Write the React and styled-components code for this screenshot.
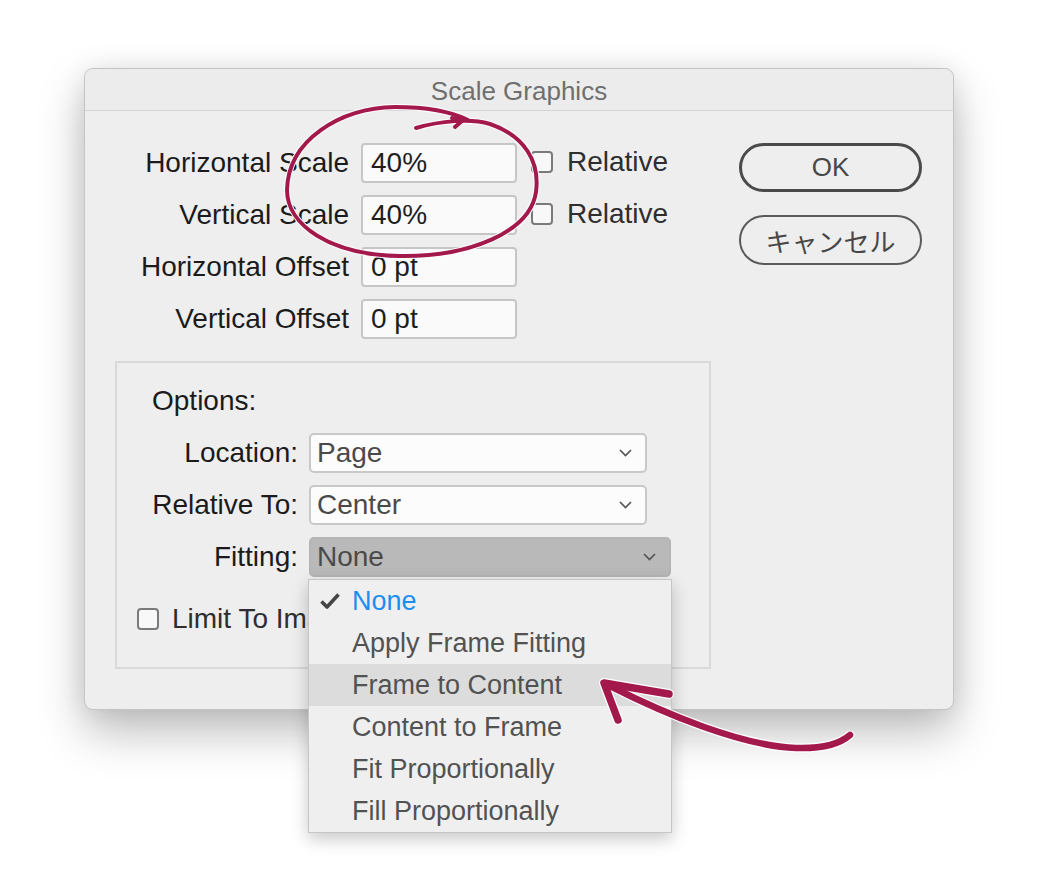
import React from "react";
import styled, { createGlobalStyle } from "styled-components";

const GlobalStyle = createGlobalStyle`
  html, body {
    margin: 0;
    background: #ffffff;
  }
  body {
    font-family: "Liberation Sans", Arial, sans-serif;
  }
`;

const menuItems = [
  "None",
  "Apply Frame Fitting",
  "Frame to Content",
  "Content to Frame",
  "Fit Proportionally",
  "Fill Proportionally",
];

function Chevron() {
  return (
    <svg width="13" height="8" viewBox="0 0 13 8">
      <path d="M1 1 L6.5 6.5 L12 1" fill="none" stroke="#555" strokeWidth="1.7" />
    </svg>
  );
}

function Check() {
  return (
    <svg width="22" height="18" viewBox="0 0 22 18">
      <path
        d="M2.5 9.5 L8 15 L19.5 2.5"
        fill="none"
        stroke="#454545"
        strokeWidth="3.6"
        strokeLinejoin="round"
      />
    </svg>
  );
}

function Select({ value, open, wide }) {
  return (
    <SelectBox $open={open} $wide={wide}>
      <span>{value}</span>
      <Chevron />
    </SelectBox>
  );
}

function Annotations() {
  const circle =
    "M416 128 C440 121, 470 118, 490 124 C525 136, 540 162, 536 192 C530 232, 470 257, 400 256 C330 255, 287 225, 287 190 C288 140, 340 108, 395 107 C425 107, 452 112, 468 120";
  const tick = "M452 118 L463 120 L455 127";
  const shaft = "M610 686 C665 714, 742 746, 796 748 C826 749, 842 742, 850 735";
  const head = "M618 720 L604 683 L669 694";
  return (
    <Overlay width="1038" height="872" viewBox="0 0 1038 872">
      <g fill="none" strokeLinecap="round" strokeLinejoin="round">
        <path d={circle} stroke="#fff" strokeWidth="6" />
        <path d={shaft} stroke="#fff" strokeWidth="9" />
        <path d={head} stroke="#fff" strokeWidth="10" />
        <path d={circle} stroke="#a3194c" strokeWidth="4" />
        <path d={tick} stroke="#a3194c" strokeWidth="4" />
        <path d={shaft} stroke="#a3194c" strokeWidth="6.5" />
        <path d={head} stroke="#a3194c" strokeWidth="7.5" />
      </g>
    </Overlay>
  );
}

export default function App() {
  return (
    <Page>
      <GlobalStyle />
      <Dialog>
        <TitleBar>Scale Graphics</TitleBar>
        <Body>
          <LeftCol>
            <Fields>
              <Label>Horizontal Scale</Label>
              <Input>40%</Input>
              <CheckRow>
                <Box />
                <span>Relative</span>
              </CheckRow>
              <Label>Vertical Scale</Label>
              <Input>40%</Input>
              <CheckRow>
                <Box />
                <span>Relative</span>
              </CheckRow>
              <Label>Horizontal Offset</Label>
              <Input>0 pt</Input>
              <span />
              <Label>Vertical Offset</Label>
              <Input>0 pt</Input>
              <span />
            </Fields>

            <OptionsBox>
              <OptionsTitle>Options:</OptionsTitle>
              <OptGrid>
                <Label>Location:</Label>
                <Select value="Page" />
                <Label>Relative To:</Label>
                <Select value="Center" />
                <Label>Fitting:</Label>
                <FittingWrap>
                  <Select value="None" open wide />
                  <Menu>
                    {menuItems.map((item, i) => (
                      <MenuItem key={item} $hover={i === 2} $selected={i === 0}>
                        {i === 0 && (
                          <CheckMark>
                            <Check />
                          </CheckMark>
                        )}
                        {item}
                      </MenuItem>
                    ))}
                  </Menu>
                </FittingWrap>
              </OptGrid>
              <LimitRow>
                <Box />
                <span>Limit To Image</span>
              </LimitRow>
            </OptionsBox>
          </LeftCol>

          <Buttons>
            <Button $primary>OK</Button>
            <Button>キャンセル</Button>
          </Buttons>
        </Body>
      </Dialog>
      <Annotations />
    </Page>
  );
}

const Page = styled.div`
  position: relative;
  width: 1038px;
  height: 872px;
  padding: 68px 0 0 84px;
  box-sizing: border-box;
  overflow: hidden;
`;

const Dialog = styled.div`
  width: 870px;
  height: 642px;
  box-sizing: border-box;
  border: 1px solid #c4c4c4;
  border-radius: 9px;
  background: #eeeeee;
  box-shadow: 0 22px 46px rgba(0, 0, 0, 0.26), 0 0 26px rgba(0, 0, 0, 0.08);
  display: flex;
  flex-direction: column;
`;

const TitleBar = styled.div`
  height: 42px;
  box-sizing: border-box;
  padding-top: 3px;
  border-bottom: 1px solid #d4d4d4;
  border-radius: 9px 9px 0 0;
  background: #ececec;
  display: flex;
  align-items: center;
  justify-content: center;
  font-size: 26px;
  color: #6f6f6f;
`;

const Body = styled.div`
  flex: 1;
  display: flex;
  padding: 32px 31px 0 30px;
`;

const LeftCol = styled.div`
  display: flex;
  flex-direction: column;
`;

const Fields = styled.div`
  display: grid;
  grid-template-columns: 234px 156px auto;
  grid-auto-rows: 40px;
  column-gap: 12px;
  row-gap: 12px;
`;

const Label = styled.div`
  display: flex;
  align-items: center;
  justify-content: flex-end;
  font-size: 28px;
  color: #1b1b1b;
  white-space: nowrap;
`;

const Input = styled.div`
  box-sizing: border-box;
  display: flex;
  align-items: center;
  padding-left: 8px;
  background: #fafafa;
  border: 2px solid #c6c6c6;
  border-radius: 4px;
  font-size: 28px;
  color: #1e1e1e;
`;

const CheckRow = styled.div`
  display: flex;
  align-items: center;
  gap: 14px;
  margin-left: 2px;
  font-size: 28px;
  color: #2e2e2e;
  margin-top: -2px;
`;

const Box = styled.div`
  width: 22px;
  height: 22px;
  box-sizing: border-box;
  border: 2px solid #7a7a7a;
  border-radius: 4px;
  background: #f8f8f8;
  flex-shrink: 0;
`;

const OptionsBox = styled.div`
  margin-top: 22px;
  width: 596px;
  height: 308px;
  box-sizing: border-box;
  border: 2px solid #d9d9d9;
  padding: 22px 0 0 35px;
`;

const OptionsTitle = styled.div`
  font-size: 28px;
  line-height: 32px;
  color: #1b1b1b;
`;

const OptGrid = styled.div`
  margin-top: 16px;
  display: grid;
  grid-template-columns: 146px auto;
  grid-auto-rows: 40px;
  column-gap: 11px;
  row-gap: 12px;
  align-items: stretch;
`;

const SelectBox = styled.div`
  box-sizing: border-box;
  width: ${(p) => (p.$wide ? "362px" : "338px")};
  height: 40px;
  display: flex;
  align-items: center;
  justify-content: space-between;
  padding: 0 13px 0 6px;
  background: ${(p) => (p.$open ? "#b9b9b9" : "#fcfcfc")};
  border: 2px solid ${(p) => (p.$open ? "#b4b4b4" : "#c8c8c8")};
  border-radius: 5px;
  font-size: 28px;
  color: #4a4a4a;
`;

const FittingWrap = styled.div`
  position: relative;
`;

const Menu = styled.div`
  position: absolute;
  top: 42px;
  left: -1px;
  width: 364px;
  box-sizing: border-box;
  border: 1px solid #c6c6c6;
  background: #efefef;
  box-shadow: 0 6px 16px rgba(0, 0, 0, 0.22);
  z-index: 2;
`;

const MenuItem = styled.div`
  position: relative;
  height: 42px;
  display: flex;
  align-items: center;
  padding-left: 43px;
  font-size: 27px;
  color: ${(p) => (p.$selected ? "#1c8ef0" : "#525252")};
  background: ${(p) => (p.$hover ? "#dcdcdc" : "transparent")};
`;

const CheckMark = styled.span`
  position: absolute;
  left: 10px;
  top: 12px;
  display: flex;
`;

const LimitRow = styled.div`
  margin: 22px 0 0 -15px;
  height: 40px;
  display: flex;
  align-items: center;
  gap: 13px;
  font-size: 28px;
  color: #2e2e2e;
`;

const Buttons = styled.div`
  margin-left: auto;
  width: 183px;
  display: flex;
  flex-direction: column;
  gap: 23px;
`;

const Button = styled.div`
  box-sizing: border-box;
  height: ${(p) => (p.$primary ? "49px" : "50px")};
  border: ${(p) => (p.$primary ? "3px solid #4a4a4a" : "2px solid #5a5a5a")};
  border-radius: 25px;
  display: flex;
  align-items: center;
  justify-content: center;
  font-family: "Liberation Sans", "Noto Sans CJK JP", sans-serif;
  font-size: 26px;
  color: #474747;
`;

const Overlay = styled.svg`
  position: absolute;
  left: 0;
  top: 0;
  pointer-events: none;
  z-index: 5;
`;
